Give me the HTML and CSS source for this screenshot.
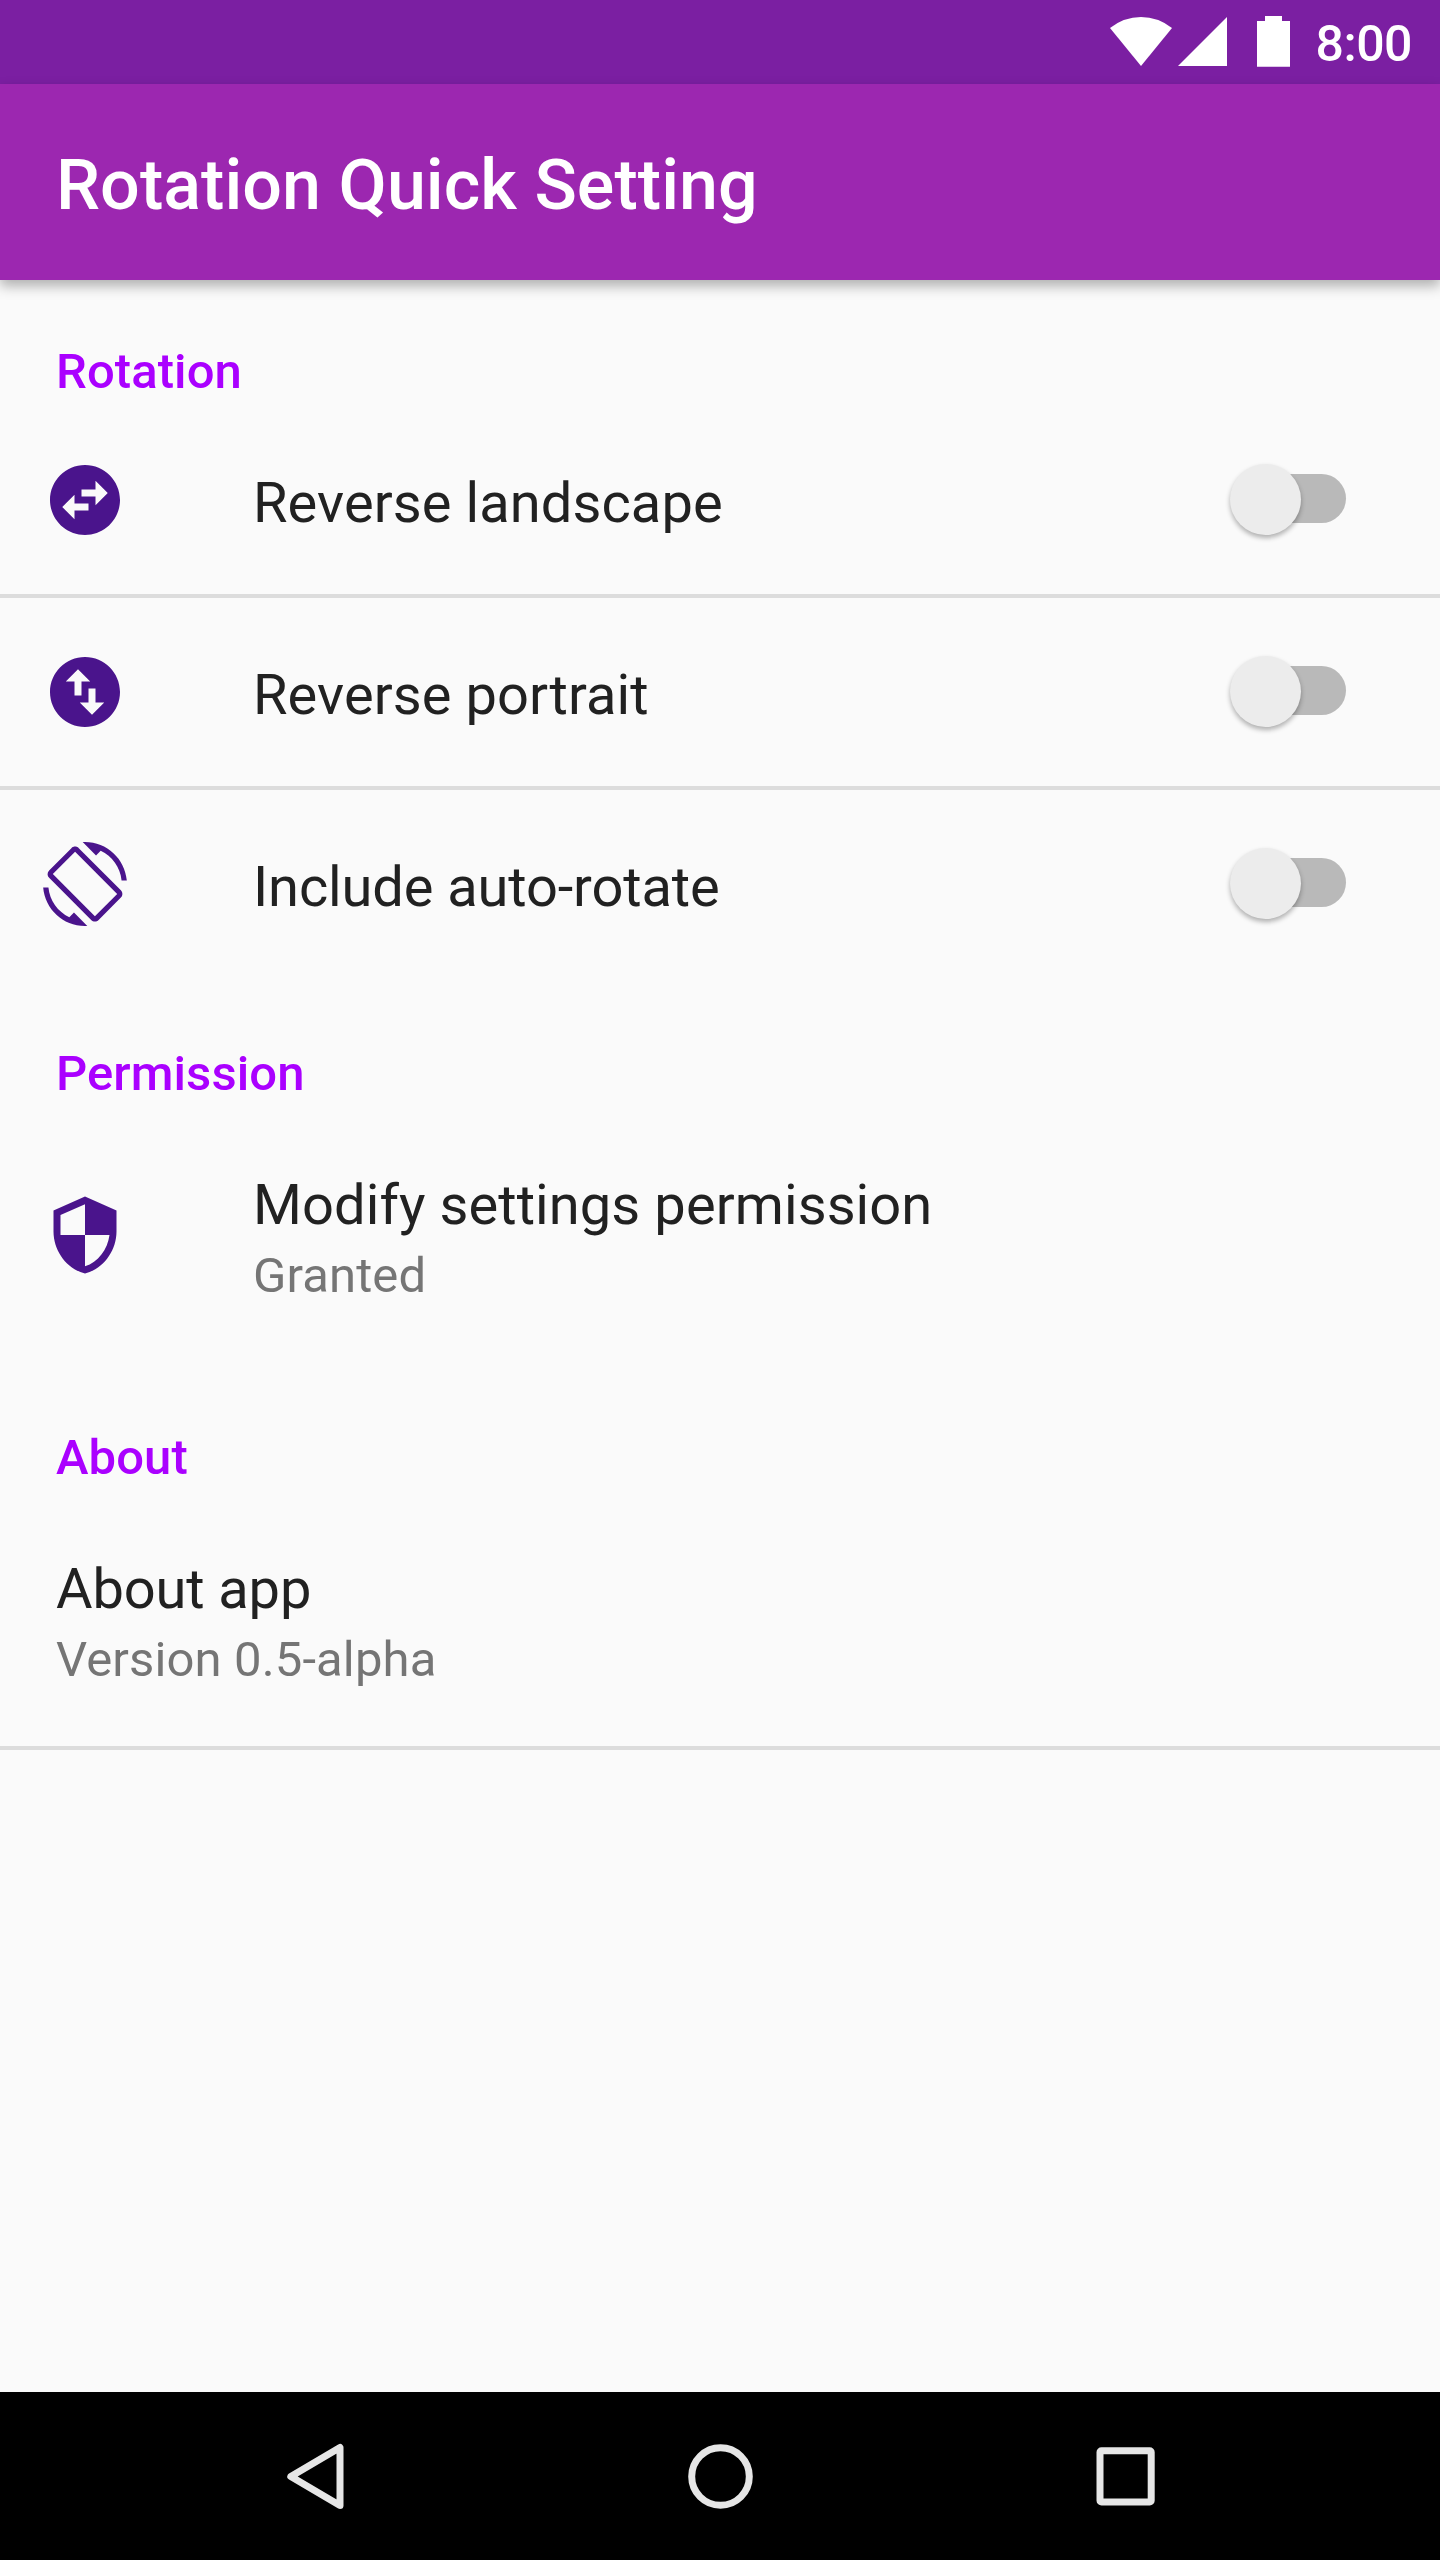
FILE: index.html
```html
<!DOCTYPE html>
<html lang="en">
<head>
<meta charset="utf-8">
<title>Rotation Quick Setting</title>
<link rel="stylesheet" href="styles.css">
</head>
<body>
<div class="screen">
  <div class="status-bar">
    <svg class="status-icons" viewBox="0 0 180 84" aria-hidden="true">
      <path d="M0 28Q14 17 31 17T62 28L31 66Z"/>
      <path d="M68 66L117 17V66Z"/>
      <path d="M147 21H155V16H172V21H180V66.700H147Z"/>
    </svg>
    <span class="clock">8:00</span>
  </div>
  <header class="app-bar"><h1 class="app-title">Rotation Quick Setting</h1></header>
  <main class="content">
    <section class="group">
      <h2 class="group-title">Rotation</h2>
      <div class="row">
        <svg class="icon" viewBox="0 0 24 24"><path d="M22 12c0-5.520-4.480-10-10-10S2 6.480 2 12s4.480 10 10 10 10-4.480 10-10zm-7-5.500l3.500 3.500-3.500 3.500V11h-4V9h4V6.500zm-6 11L5.500 14 9 10.500V13h4v2H9v2.500z"/></svg>
        <div class="label"><div class="name">Reverse landscape</div></div>
        <div class="switch"><div class="thumb"></div></div>
      </div>
      <div class="row">
        <svg class="icon" viewBox="0 0 24 24"><path d="M12 2C6.480 2 2 6.480 2 12s4.480 10 10 10 10-4.480 10-10S17.520 2 12 2zM6.500 9L10 5.500 13.500 9H11v4H9V9H6.500zm11 6L14 18.500 10.500 15H13v-4h2v4h2.500z"/></svg>
        <div class="label"><div class="name">Reverse portrait</div></div>
        <div class="switch"><div class="thumb"></div></div>
      </div>
      <div class="row last">
        <svg class="icon" viewBox="0 0 24 24"><path d="M16.480 2.520c3.270 1.550 5.610 4.720 5.970 8.480h1.500C23.440 4.840 18.290 0 12 0l-.66.03 3.810 3.810 1.330-1.320zm-6.250-.77c-.59-.59-1.540-.59-2.120 0L1.750 8.110c-.59.59-.59 1.540 0 2.120l12.020 12.020c.59.59 1.540.59 2.120 0l6.360-6.360c.59-.59.59-1.540 0-2.120L10.230 1.750zm4.600 19.440L2.810 9.170l6.360-6.360 12.020 12.020-6.360 6.360zm-7.310.29C4.250 19.940 1.910 16.760 1.550 13H.05C.56 19.160 5.710 24 12 24l.66-.03-3.810-3.810-1.330 1.320z"/></svg>
        <div class="label"><div class="name tight">Include auto-rotate</div></div>
        <div class="switch"><div class="thumb"></div></div>
      </div>
    </section>
    <section class="group">
      <h2 class="group-title">Permission</h2>
      <div class="row tall last">
        <svg class="icon" viewBox="0 0 24 24"><path d="M12 1L3 5v6c0 5.550 3.840 10.740 9 12 5.160-1.260 9-6.450 9-12V5l-9-4zm0 10.990h7c-.53 4.120-3.280 7.790-7 8.940V12H5V6.300l7-3.110v8.800z"/></svg>
        <div class="label"><div class="name">Modify settings permission</div><div class="summary">Granted</div></div>
      </div>
    </section>
    <section class="group">
      <h2 class="group-title">About</h2>
      <div class="row tall plain">
        <div class="label"><div class="name tight">About app</div><div class="summary">Version 0.5-alpha</div></div>
      </div>
    </section>
  </main>
  <nav class="nav-bar">
    <svg class="nav-icon" viewBox="0 0 84 84"><path d="M68 13.500V71.500L18.800 42.500Z"/></svg>
    <svg class="nav-icon" viewBox="0 0 84 84"><circle cx="42.500" cy="42.500" r="28.800"/></svg>
    <svg class="nav-icon" viewBox="0 0 84 84"><rect x="16" y="16.800" width="51.200" height="51.200" rx="1.500"/></svg>
  </nav>
</div>
</body>
</html>
```

FILE: styles.css
```css
* { box-sizing: border-box; }

body {
  margin: 0;
  background: #fafafa;
  font-family: Roboto, "Liberation Sans", sans-serif;
}

.screen {
  display: flex;
  flex-direction: column;
  width: 1440px;
  height: 2560px;
  overflow: hidden;
}

.status-bar {
  display: flex;
  flex: none;
  justify-content: space-between;
  height: 84px;
  padding: 0 28px 0 1110px;
  background: #7b1fa2;
}

.status-icons {
  flex: none;
  width: 180px;
  height: 84px;
  fill: #fff;
}

.clock {
  padding-top: 16px;
  color: #fff;
  font-size: 50px;
  font-weight: 500;
  line-height: 57px;
  letter-spacing: -0.5px;
}

.app-bar {
  display: flex;
  flex: none;
  align-items: center;
  height: 196px;
  padding: 6px 56px 0;
  background: #9c27b0;
  box-shadow: 0 6px 12px rgba(0, 0, 0, 0.3);
}

.app-title {
  margin: 0;
  color: #fff;
  font-size: 70px;
  font-weight: 500;
  line-height: 82px;
  letter-spacing: 0.06px;
}

.content { flex: 1; }

.group-title {
  margin: 0;
  padding: 63px 56px 6px;
  color: #aa00ff;
  font-size: 49px;
  font-weight: 500;
  line-height: 57px;
  letter-spacing: 0.08px;
}

.row {
  display: flex;
  align-items: center;
  height: 192px;
  padding: 0 94px 0 43px;
  border-bottom: 4px solid #dcdcdc;
}

.row.last { border-bottom-color: transparent; }
.row.tall { height: 258px; }
.row.plain { padding-left: 56px; }
.row.plain .label { margin-left: 0; }

.icon {
  flex: none;
  width: 84px;
  height: 84px;
  fill: #4a148c;
}

.label {
  flex: 1;
  margin-left: 126px;
  padding-top: 6px;
}

.name {
  color: #212121;
  font-size: 56px;
  line-height: 66px;
  letter-spacing: 0.09px;
}

.name.tight { letter-spacing: -0.12px; }

.summary {
  margin-top: 9px;
  color: #757575;
  font-size: 49px;
  line-height: 57px;
  letter-spacing: 0.12px;
}

.switch {
  display: flex;
  align-items: center;
  width: 108px;
  height: 49px;
  margin-bottom: 3px;
  border-radius: 25px;
  background: #b9b9b9;
}

.thumb {
  flex: none;
  width: 71px;
  height: 71px;
  margin: 1px 0 0 -8px;
  border-radius: 50%;
  background: #ececec;
  box-shadow: 0 3px 5px rgba(0, 0, 0, 0.3);
}

.nav-bar {
  display: flex;
  flex: none;
  align-items: center;
  justify-content: space-between;
  height: 168px;
  padding: 0 272px;
  background: #000;
}

.nav-icon {
  width: 84px;
  height: 84px;
  fill: none;
  stroke: #e6e6e6;
  stroke-width: 7;
  stroke-linejoin: round;
}
```
